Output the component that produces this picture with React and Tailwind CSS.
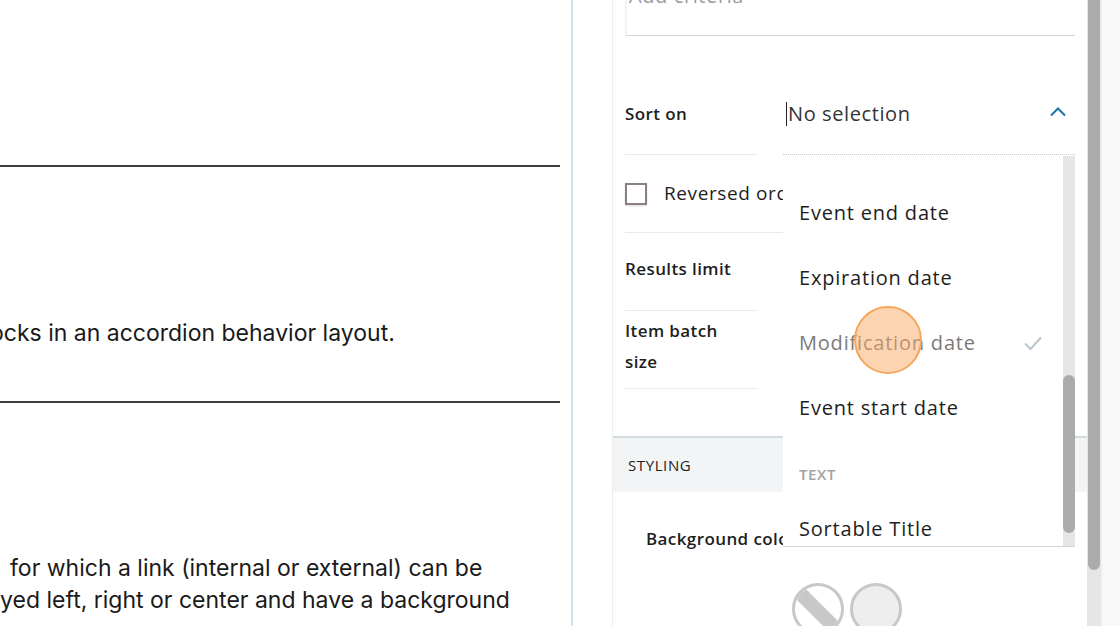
import React from "react";

const sideFont = { fontFamily: '"Open Sans", "Liberation Sans", sans-serif' };

function Option({ children, selected }) {
  return (
    <div className="h-[65px] flex items-center justify-between pl-4 pr-[20px]">
      <span className={"text-[20px] tracking-[0.8px] " + (selected ? "text-[#7a7a7a]" : "text-[#1e1e1e]")}>{children}</span>
      {selected && (
        <svg width="20" height="16" viewBox="0 0 20 16" fill="none">
          <path d="M2 8.5l5.5 5.5L18 2.5" stroke="#b9c7cd" strokeWidth="2" />
        </svg>
      )}
    </div>
  );
}

export default function App() {
  return (
    <div className="w-[1120px] h-[626px] overflow-hidden flex bg-white relative">
      {/* LEFT CONTENT */}
      <main
        className="w-[571px] shrink-0 overflow-hidden pr-[11px] text-[23px] leading-[32px] text-[#1a1a1a]"
        style={{ fontFamily: 'Inter, "Liberation Sans", sans-serif' }}
      >
        <div className="h-[165px]" />
        <div className="h-[2px] bg-[#3f3f3f]" />
        <p className="mt-[150px] -ml-[10px] whitespace-nowrap">ocks in an accordion behavior layout.</p>
        <div className="mt-[52px] h-[2px] bg-[#3f3f3f]" />
        <p className="mt-[149px] whitespace-nowrap">
          <span className="pl-[10px]">for which a link (internal or external) can be</span>
          <br />
          yed left, right or center and have a background
        </p>
      </main>

      {/* DIVIDER */}
      <div className="w-[2px] shrink-0 bg-[#cfe2ea]" />

      {/* SIDEBAR */}
      <aside className="flex-1 flex" style={sideFont}>
        <div className="w-[39px] shrink-0" />
        <div className="flex-1 border-l border-[#eceff1] relative">
          {/* criteria input */}
          <div className="mx-[12px] -mt-[18px] h-[54px] border-b border-l-2 border-b-[#c9d6dc] border-l-[#eef4f7] pl-[2px]">
            <span className="text-[20px] text-[#9a9a9a] leading-[28px] tracking-[0.6px]">Add criteria</span>
          </div>

          <div className="mx-[12px]">
            {/* Sort on */}
            <div className="flex mt-[37px] relative">
              <div className="w-[132px] shrink-0 h-[82px] border-b border-[#e4eaed] flex items-center text-[17px] font-semibold tracking-[0.4px] text-[#1e1e1e]">
                Sort on
              </div>
              <div className="ml-[26px] flex-1 h-[82px] border-b border-dotted border-[#c3ccd0] flex items-center justify-between pl-[3px] pr-[8px]">
                <span className="text-[20px] text-[#333] border-l border-[#222] pl-[1px] leading-[24px] tracking-[0.6px]">No selection</span>
                <svg width="18" height="12" viewBox="0 0 18 12" fill="none" className="-mt-1">
                  <path d="M2 9.5l7-7 7 7" stroke="#1c74a6" strokeWidth="2" />
                </svg>
              </div>

              {/* dropdown menu */}
              <div className="absolute left-[158px] right-0 top-[83px] h-[391px] bg-white border-b border-[#c9d6dc] z-10 flex overflow-hidden">
                <div className="flex-1 pt-[24px]">
                  <Option>Event end date</Option>
                  <Option>Expiration date</Option>
                  <Option selected>Modification date</Option>
                  <Option>Event start date</Option>
                  <div className="h-[56px] flex items-end pb-[11px] pl-4 text-[15px] font-semibold tracking-[0.6px] text-[#a3a3a3]">TEXT</div>
                  <Option>Sortable Title</Option>
                </div>
                <div className="w-[12px] bg-[#e6e6e6] flex flex-col">
                  <div className="h-[219px]" />
                  <div className="h-[158px] bg-[#ababab] rounded-full" />
                </div>
              </div>
            </div>

            {/* Reversed order */}
            <div className="h-[78px] border-b border-[#e4eaed] flex items-center gap-[17px] w-[158px] whitespace-nowrap">
              <div className="w-[22px] h-[22px] border-2 border-[#8c7f80] shadow-[0_1px_2px_rgba(0,0,0,0.15)] shrink-0" />
              <span className="text-[19px] tracking-[0.6px] text-[#1e1e1e]">Reversed order</span>
            </div>

            {/* Results limit */}
            <div className="w-[132px] h-[78px] border-b border-[#e4eaed] flex items-center pb-[6px] text-[17px] font-semibold tracking-[0.4px] text-[#1e1e1e]">
              Results limit
            </div>

            {/* Item batch size */}
            <div className="w-[132px] h-[78px] border-b border-[#e4eaed] flex items-center pb-[8px] text-[17px] font-semibold tracking-[0.4px] text-[#1e1e1e] leading-[31px]">
              Item batch
              <br />
              size
            </div>
          </div>

          {/* STYLING header */}
          <div className="mt-[47px] h-[56px] bg-[#f3f4f5] border-t-2 border-[#d3dcdf] flex items-center pl-[15px] text-[15px] text-[#1e1e1e] tracking-[0.6px]">
            STYLING
          </div>

          {/* Background color */}
          <div className="pl-[33px] pt-[34px] text-[17px] font-semibold tracking-[0.4px] text-[#1e1e1e] whitespace-nowrap">Background color</div>
          <div className="flex gap-[6px] pl-[179px] pt-[31px]">
            <div className="w-[52px] h-[52px] rounded-full border-[3px] border-[#c8c8c8] bg-white overflow-hidden relative">
              <div className="absolute left-1/2 top-[-10px] w-[14px] h-[70px] -ml-[7px] bg-[#c8c8c8] -rotate-45" />
            </div>
            <div className="w-[52px] h-[52px] rounded-full border-[3px] border-[#c8c8c8] bg-[#eeeeee]" />
          </div>
        </div>

        {/* outer scrollbar */}
        <div className="w-[14px] shrink-0 bg-[#e6e6e6] px-[1px]">
          <div className="h-[570px] bg-[#ababab] rounded-b-full" />
        </div>
        <div className="w-[19px] shrink-0 bg-[#f8f8f8] border-l border-[#efefef]" />
      </aside>

      {/* click indicator */}
      <div className="absolute left-[854px] top-[306px] w-[68px] h-[68px] rounded-full bg-[rgba(250,170,100,0.5)] border-2 border-[#f5a65c] z-20" />
    </div>
  );
}
